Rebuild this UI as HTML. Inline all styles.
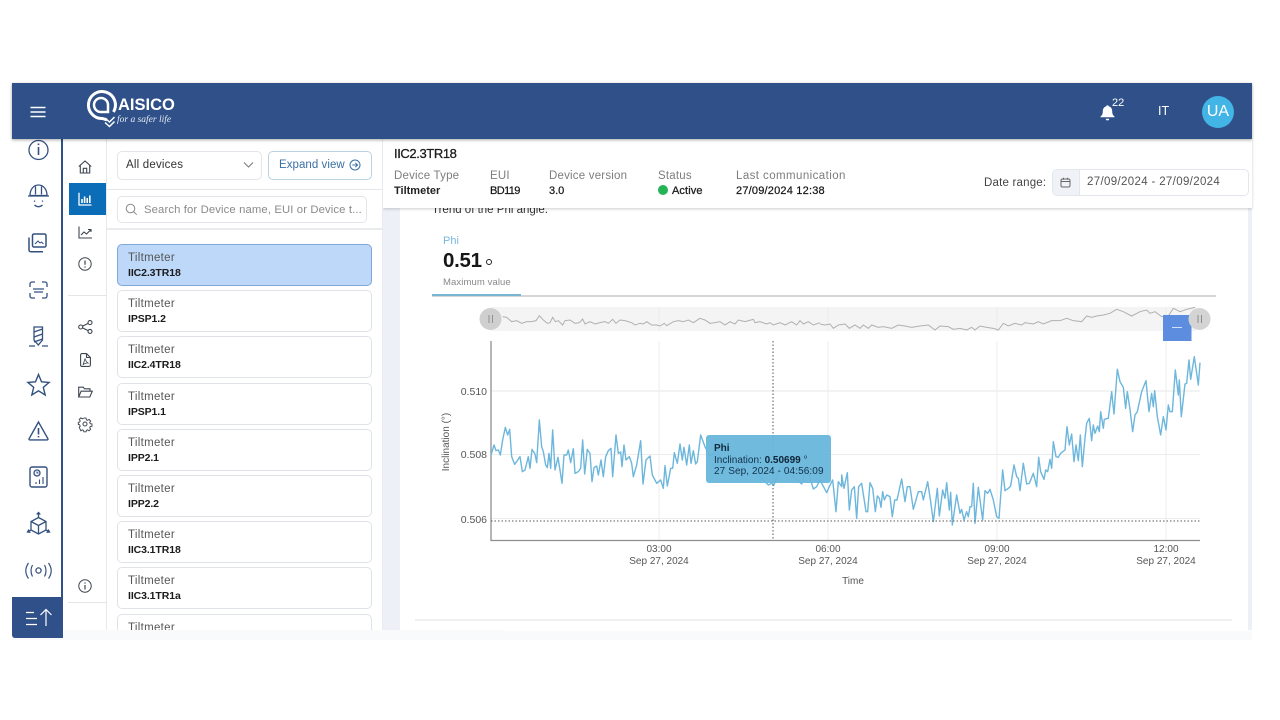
<!DOCTYPE html>
<html lang="en"><head><meta charset="utf-8"><title>AISICO</title>
<style>
html,body{margin:0;padding:0;background:#fff}
body{width:1280px;height:720px;position:relative;overflow:hidden;font-family:"Liberation Sans",sans-serif;color:#222}
.a{position:absolute;white-space:nowrap}
.card{position:absolute;left:117px;width:253px;height:40px;border:1px solid #dfe3e8;border-radius:5px;background:#fff;overflow:hidden}
.card .t{position:absolute;left:10px;top:7px;font-size:11.5px;letter-spacing:.3px;color:#555}
.card .n{position:absolute;left:10px;top:22px;font-size:10.5px;font-weight:bold;color:#1b1b1b;letter-spacing:-.1px}
.lbl{position:absolute;top:170px;font-size:11.5px;letter-spacing:.2px;color:#7d7d7d;white-space:nowrap}
.val{position:absolute;top:185px;font-size:11px;font-weight:bold;color:#222;white-space:nowrap}
svg.i{position:absolute;overflow:visible;fill:none}
</style></head><body>

<!-- backgrounds -->
<div class="a" style="left:12px;top:139px;width:1240px;height:501px;background:#fff"></div>
<div class="a" style="left:383px;top:139px;width:869px;height:491px;background:#edf1f7"></div>
<div class="a" style="left:400px;top:200px;width:848px;height:430px;background:#fff"></div>
<div class="a" style="left:12px;top:630px;width:494px;height:10px;background:#f9fafb"></div>
<div class="a" style="left:380px;top:631px;width:872px;height:9px;background:#f9fafb"></div>
<div class="a" style="left:415px;top:619px;width:817px;height:2px;background:#efefef"></div>

<!-- trend text clipped by header -->
<div class="a" style="left:432px;top:204px;font-size:11.5px;color:#333">Trend of the Phi angle.</div>

<!-- detail header -->
<div class="a" style="left:383px;top:139px;width:869px;height:69px;background:#fff;box-shadow:0 1px 3px rgba(0,0,0,.2)"></div>
<div class="a" style="left:394px;top:146px;font-size:13px;color:#1c1c1c;letter-spacing:-.4px;-webkit-text-stroke:.3px #1c1c1c">IIC2.3TR18</div>
<div class="lbl" style="left:394px">Device Type</div><div class="val" style="left:394px">Tiltmeter</div>
<div class="lbl" style="left:490px">EUI</div><div class="val" style="left:490px;font-weight:normal;color:#111;letter-spacing:-.6px;-webkit-text-stroke:.2px #111">BD119</div>
<div class="lbl" style="left:549px">Device version</div><div class="val" style="left:549px;font-weight:normal;color:#111;-webkit-text-stroke:.2px #111">3.0</div>
<div class="lbl" style="left:658px">Status</div>
<div class="a" style="left:658px;top:185px;width:10px;height:10px;border-radius:50%;background:#22b455"></div>
<div class="val" style="left:672px;font-weight:normal;-webkit-text-stroke:.3px #222;letter-spacing:.1px">Active</div>
<div class="lbl" style="left:736px;letter-spacing:.42px">Last communication</div><div class="val" style="left:736px;font-weight:normal;color:#111;letter-spacing:.2px;-webkit-text-stroke:.2px #111">27/09/2024 12:38</div>
<div class="a" style="left:984px;top:177px;font-size:11.5px;letter-spacing:.2px;color:#444">Date range:</div>
<div class="a" style="left:1052px;top:169px;width:195px;height:25px;border:1px solid #e3e7ed;border-radius:5px;background:#fff;overflow:hidden">
 <div class="a" style="left:0;top:0;width:26px;height:25px;background:#eff3f8;border-right:1px solid #e3e7ed"></div>
 <div class="a" style="left:34px;top:6px;font-size:11.5px;letter-spacing:.34px;color:#555">27/09/2024 - 27/09/2024</div>
</div>
<svg class="i" style="left:1060px;top:177px" width="11" height="11" viewBox="0 0 11 11" stroke="#666" stroke-width="1"><rect x="1" y="2" width="9" height="8" rx="1.5"/><path d="M1 4.5h9M3.5 .8v2M7.5 .8v2"/></svg>

<!-- device list -->
<div class="a" style="left:106px;top:139px;width:277px;height:491px;background:#fff;border-left:1px solid #e8e8e8;border-right:1px solid #e8ecf1;box-sizing:border-box"></div>
<div class="a" style="left:107px;top:189px;width:275px;height:1px;background:#e5e7ea"></div>
<div class="a" style="left:107px;top:228px;width:275px;height:2px;background:#e9ebee"></div>
<div class="a" style="left:117px;top:151px;width:143px;height:27px;border:1px solid #e2e5e9;border-radius:5px"></div>
<div class="a" style="left:126px;top:159px;font-size:11.5px;letter-spacing:.2px;color:#333">All devices</div>
<svg class="i" style="left:243px;top:161px" width="11" height="8" viewBox="0 0 11 8" stroke="#777" stroke-width="1"><path d="M1 1.5l4.5 4.500 4.500-4.500"/></svg>
<div class="a" style="left:268px;top:151px;width:102px;height:27px;border:1px solid #b9d3e3;border-radius:5px"></div>
<div class="a" style="left:279px;top:159px;font-size:11.5px;letter-spacing:.05px;color:#3a70a5">Expand view</div>
<svg class="i" style="left:349px;top:159px" width="12" height="12" viewBox="0 0 12 12" stroke="#3a70a5" stroke-width="1"><circle cx="6" cy="6" r="5"/><path d="M3.3 6h5.200M6.300 3.800L8.600 6 6.300 8.200"/></svg>
<div class="a" style="left:117px;top:196px;width:248px;height:25px;border:1px solid #e2e5e9;border-radius:5px"></div>
<svg class="i" style="left:125px;top:203px" width="13" height="13" viewBox="0 0 13 13" stroke="#8a8a8a" stroke-width="1"><circle cx="5.500" cy="5.500" r="4.300"/><path d="M8.700 8.700l3 3"/></svg>
<div class="a" style="left:144px;top:204px;font-size:11.3px;letter-spacing:.12px;color:#8a8a8a">Search for Device name, EUI or Device t...</div>

<div class="card" style="top:244px;height:40px;background:#bdd8f9;border-color:#7fa8d8"><div class="t">Tiltmeter</div><div class="n">IIC2.3TR18</div></div>
<div class="card" style="top:290px"><div class="t">Tiltmeter</div><div class="n">IPSP1.2</div></div>
<div class="card" style="top:336px"><div class="t">Tiltmeter</div><div class="n">IIC2.4TR18</div></div>
<div class="card" style="top:383px"><div class="t">Tiltmeter</div><div class="n">IPSP1.1</div></div>
<div class="card" style="top:429px"><div class="t">Tiltmeter</div><div class="n">IPP2.1</div></div>
<div class="card" style="top:475px"><div class="t">Tiltmeter</div><div class="n">IPP2.2</div></div>
<div class="card" style="top:521px"><div class="t">Tiltmeter</div><div class="n">IIC3.1TR18</div></div>
<div class="card" style="top:567px"><div class="t">Tiltmeter</div><div class="n">IIC3.1TR1a</div></div>
<div class="card" style="top:614px;height:40px;clip-path:inset(0 0 24px 0)"><div class="t">Tiltmeter</div></div>
<div class="a" style="left:107px;top:630px;width:276px;height:10px;background:#f9fafb"></div>

<!-- sub nav -->
<div class="a" style="left:69px;top:183px;width:37px;height:32px;background:#0b6cb8"></div>
<div class="a" style="left:68px;top:295px;width:38px;height:1px;background:#e5e5e5"></div>
<div class="a" style="left:68px;top:602px;width:38px;height:1px;background:#e5e5e5"></div>
<svg class="i" style="left:78px;top:160px" width="14" height="14" viewBox="0 0 14 14" stroke="#3d4650" stroke-width="1.100"><path d="M.8 6.500L7 1l6.200 5.500M2.300 5.500V13h9.400V5.500M5.300 13V8.300h3.400V13"/></svg>
<svg class="i" style="left:78px;top:192px" width="14" height="14" viewBox="0 0 14 14" stroke="#fff" stroke-width="1.300"><path d="M1 .8V13h12.500"/><path d="M4 11V7M6.600 11V4.500M9.200 11V6M11.800 11V3.500" stroke-width="1.600"/></svg>
<svg class="i" style="left:78px;top:226px" width="14" height="13" viewBox="0 0 14 13" stroke="#3d4650" stroke-width="1.100"><path d="M1 .5V12h13"/><path d="M3 9l3-3 2.500 2 4-4M10 3.500h3V6"/></svg>
<svg class="i" style="left:78px;top:257px" width="14" height="14" viewBox="0 0 14 14" stroke="#3d4650" stroke-width="1"><circle cx="7" cy="7" r="6.200"/><path d="M7 3.500v4.300M7 9.400v1.200" stroke-width="1.200"/></svg>
<svg class="i" style="left:78px;top:320px" width="15" height="14" viewBox="0 0 15 14" stroke="#3d4650" stroke-width="1.100"><circle cx="2.700" cy="7" r="2"/><circle cx="12" cy="2.600" r="2"/><circle cx="12" cy="11.400" r="2"/><path d="M4.500 6.100l5.700-2.700M4.500 7.900l5.700 2.700"/></svg>
<svg class="i" style="left:80px;top:353px" width="11" height="14" viewBox="0 0 11 14" stroke="#3d4650" stroke-width="1.100"><path d="M6.500.6H2A1.400 1.400 0 0 0 .6 2v10A1.400 1.400 0 0 0 2 13.400h7a1.400 1.400 0 0 0 1.400-1.400V4.500zM6.500.6v3.900h3.900"/><path d="M5 5.500c.7 2.500 1.200 3.500 3 4.500-2 0-4 .5-5 2 .5-2 1.500-4 2-6.500" stroke-width=".8"/></svg>
<svg class="i" style="left:78px;top:386px" width="15" height="12" viewBox="0 0 15 12" stroke="#3d4650" stroke-width="1.100"><path d="M.7 11V1.200h4.500l1.300 1.600h5.500v2.400M.7 11l2.400-5.800h11.200L11.800 11z"/></svg>
<svg class="i" style="left:78px;top:417px" width="14" height="14" viewBox="0 0 14 14" stroke="#3d4650" stroke-width="1"><circle cx="7" cy="7" r="2"/><path d="M5.800.8h2.400l.3 1.800 1.300.6 1.500-1 1.700 1.700-1 1.500.6 1.300 1.800.3v2.400l-1.800.3-.6 1.300 1 1.500-1.700 1.700-1.500-1-1.300.6-.3 1.500H5.800l-.3-1.500-1.300-.6-1.500 1L1 10.700l1-1.500-.6-1.300-1.400-.3V5.400l1.400-.3.6-1.300-1-1.500L2.700 .6l1.500 1 1.300-.6z" transform="translate(.3 .3) scale(.95)"/></svg>
<svg class="i" style="left:78px;top:579px" width="14" height="14" viewBox="0 0 14 14" stroke="#3d4650" stroke-width="1"><circle cx="7" cy="7" r="6.200"/><path d="M7 6v4.500M7 3.400v1.200" stroke-width="1.200"/></svg>

<!-- left rail -->
<div class="a" style="left:61px;top:139px;width:2px;height:499px;background:#2f5088"></div>
<svg class="i" style="left:12px;top:139px;stroke:#33507f" width="50" height="460" viewBox="0 0 50 460" stroke-width="1.300">
 <!-- info -->
 <circle cx="26.500" cy="11" r="9.500"/><path d="M26.500 8v8M26.500 4.500v1.600" stroke-width="1.600"/>
 <!-- helmet with face -->
 <path d="M16 57h21M18 56.500c0-6 3.500-10.500 8.500-10.500S35 50.500 35 56.500M23.500 47.500v8M29.500 47.500v8M18 56.500h17"/>
 <path d="M22.500 61.500v1.200M30.500 61.500v1.200M22.500 66c2.500 2.300 5.500 2.300 8 0"/>
 <!-- images -->
 <rect x="20.500" y="95" width="13.500" height="13" rx="1.500" stroke-width="1.500"/>
 <path d="M17 98.500v12.500a1.800 1.800 0 0 0 1.800 1.800H31" stroke-width="1.500"/>
 <path d="M23 105l3-3 2 2 1.500-1 2 2" stroke-width="1"/>
 <!-- scan -->
 <path d="M18 148v-3a2 2 0 0 1 2-2h3M30 143h3a2 2 0 0 1 2 2v3M35 154v3a2 2 0 0 1-2 2h-3M23 159h-3a2 2 0 0 1-2-2v-3M21 150h11M22 153h9"/>
 <!-- drill -->
 <path d="M22 188h8.500v13l-4.200 5-4.300-5zM22 193l8.500-3M22 198l8.500-3M22 203l8.500-3"/>
 <path d="M17 207h6M30 207h6"/>
 <!-- star -->
 <path d="M26.500 235.500l3 7.300 7.600.6-5.800 5 1.900 7.600-6.700-4.200-6.700 4.200 1.900-7.600-5.800-5 7.600-.6z" stroke-width="1.400"/>
 <!-- warning -->
 <path d="M26.500 283l-9.400 16.700a.8.800 0 0 0 .7 1.200h17.400a.8.800 0 0 0 .7-1.200z" stroke-width="1.400"/><path d="M26.500 289v6.500M26.500 297v1.400" stroke-width="1.600"/>
 <!-- report -->
 <rect x="18" y="328" width="17" height="20" rx="2" stroke-width="1.400"/><circle cx="25" cy="334" r="3"/><path d="M25 332.500V334h1.500M24 345v-2M27.500 345v-4.500M31 345v-7" stroke-width="1.100"/>
 <!-- cube -->
 <path d="M26.500 378.500l7.500 4v8.500l-7.500 4-7.500-4v-8.500zM19 382.500l7.500 4 7.500-4M26.500 386.500v8.500M26.500 378.500V374M24.700 375.500l1.800-2 1.800 2M19 391l-3 1.800M34 391l3 1.800M17 390.500l-1.500 2.500 3 .3M36 390.500l1.500 2.500-3 .3"/>
 <!-- radio -->
 <circle cx="26.500" cy="431.500" r="2.600"/><path d="M20.500 426c-2 3.500-2 8 0 11.500M32.500 426c2 3.500 2 8 0 11.500M16.500 424c-3.500 5-3.500 10.500 0 15.500M36.500 424c3.500 5 3.500 10.500 0 15.500" stroke-width="1.200"/>
</svg>
<div class="a" style="left:12px;top:597px;width:51px;height:41px;background:#2f5088;border-radius:0 0 0 3px"></div>
<svg class="i" style="left:25px;top:608px" width="26" height="20" viewBox="0 0 26 20" stroke="#fff" stroke-width="1.200"><path d="M1 4.500h8M1 10.500h11M1 16.500h11M21 18V2M15.500 7L21 1.500 26.500 7"/></svg>

<!-- top bar -->
<div class="a" style="left:12px;top:83px;width:1240px;height:56px;background:#2f5088;box-shadow:0 1px 3px rgba(0,0,0,.35)"></div>
<svg class="i" style="left:30px;top:106px" width="16" height="12" viewBox="0 0 16 12" stroke="#fff" stroke-width="1.500"><path d="M.5 1.500h15M.5 6h15M.5 10.500h15"/></svg>
<svg class="i" style="left:85px;top:89px" width="34" height="40" viewBox="0 0 34 40" stroke="#fff"><path d="M22 31L17.500 29.500A13.500 13.500 0 1 1 28.500 23" stroke-width="3"/><path d="M23 16a7 7 0 1 0-7 7h7v-7" stroke-width="2.500"/><path d="M20 29l4.500 4 5-5M20 33.500l4.500 4 5-5" stroke-width="1.500"/></svg>
<div class="a" style="left:118px;top:96px;font-size:16.5px;font-weight:bold;color:#fff">AISICO</div>
<div class="a" style="left:117px;top:115px;font-family:'Liberation Serif',serif;font-style:italic;font-size:9.500px;color:#e6ecf5">for a safer life</div>
<svg class="i" style="left:1100px;top:104px" width="15" height="17" viewBox="0 0 15 17"><path d="M7.500 1.200c.8 0 1.200.5 1.300 1.200 2.200.6 3.400 2.500 3.400 4.800 0 2.500.6 4 2.300 5.300v.8H.5v-.8c1.700-1.300 2.300-2.800 2.300-5.300 0-2.300 1.200-4.200 3.400-4.800.1-.7.5-1.200 1.300-1.200zM5.800 14.700h3.400a1.700 1.700 0 0 1-3.400 0z" fill="#fff"/></svg>
<div class="a" style="left:1112px;top:97px;font-size:11px;color:#fff">22</div>
<div class="a" style="left:1158px;top:104px;font-size:12.500px;color:#fff">IT</div>
<div class="a" style="left:1202px;top:96px;width:32px;height:32px;border-radius:50%;background:#42b5e6;color:#fff;font-size:16px;line-height:32px;text-align:center">UA</div>

<!-- tab -->
<div class="a" style="left:443px;top:235px;font-size:11px;color:#76b8dc">Phi</div>
<div class="a" style="left:443px;top:249px;font-size:20.500px;font-weight:bold;color:#161616;letter-spacing:-.3px">0.51</div>
<div class="a" style="left:486px;top:259px;width:4px;height:4px;border:1.400px solid #222;border-radius:50%"></div>
<div class="a" style="left:443px;top:277px;font-size:9.500px;letter-spacing:.1px;color:#888">Maximum value</div>
<div class="a" style="left:432px;top:295px;width:784px;height:2px;background:#d6d6d6"></div>
<div class="a" style="left:432px;top:294px;width:89px;height:2px;background:#77b5d3"></div>

<!-- chart -->
<svg class="a" style="left:0;top:0" width="1280" height="720" viewBox="0 0 1280 720">
 <rect x="491" y="307" width="705" height="24" fill="#f4f4f4"/>
 <g stroke="#ececec" stroke-width="1" fill="none">
  <path d="M659 341V540M828 341V540M997 341V540M1166 341V540"/>
  <path d="M491 391H1200" stroke-width="1.300"/><path d="M491 454.500H1200"/><path d="M491 518.500H1200"/>
 </g>
 <path d="M659 307v24M828 307v24M997 307v24M1166 307v24" stroke="#ebebeb" fill="none"/>
 <g fill="none" stroke="#b0b0b0" stroke-width="1">
  <polyline vector-effect="non-scaling-stroke" transform="translate(430 300) scale(.33333)" points="218,50 230,52 245,65 260,62 275,70 290,65 305,65 318,62 328,47 340,60 352,70 360,68 368,52 376,65 385,62 398,75 405,62 420,60 435,70 448,68 458,57 465,72 480,65 495,72 510,68 525,65 535,70 548,58 558,70 570,60 585,62 605,68 615,75 630,70 640,72 650,65 665,75 680,75 690,78 703,70 710,77 730,65 745,62 760,65 775,60 790,68 810,55 825,60 840,70 855,68 870,65 885,75 900,65 915,72 925,60 945,65 970,58 975,68 990,65 1010,72 1020,68 1030,75 1050,68 1065,75 1085,65 1100,75 1110,62 1120,72 1135,65 1150,75 1170,68"/>
  <polyline vector-effect="non-scaling-stroke" transform="translate(820 300) scale(.33333)" points="0,72 15,75 30,72 40,85 55,75 75,72 88,85 105,75 120,85 130,75 145,85 155,75 175,82 190,80 215,85 235,75 255,78 275,82 300,78 325,75 345,90 360,78 385,80 400,88 420,85 440,90 455,82 465,90 480,78 500,82 520,85 535,90 550,70 565,78 585,70 605,75 615,68 640,72 655,65 670,72 695,62 720,62 740,55 760,62 785,65 800,48 815,52 830,48 850,45 870,40 890,28 910,35 935,48 960,35 980,30 990,40 1005,35 1025,50 1045,48 1060,25 1080,35 1100,28 1125,22"/>
 </g>
 <circle cx="490.500" cy="319" r="11" fill="#cfcfcf"/><path d="M489 315v8M492.500 315v8" stroke="#909090" fill="none"/>
 <rect x="1163" y="315" width="28.500" height="26" fill="#5d8ddf"/><path d="M1172 327.500h10" stroke="#cfe0f7" fill="none"/>
 <circle cx="1199.500" cy="319" r="11" fill="#d4d4d4"/><path d="M1198 315v8M1201.500 315v8" stroke="#8c8c8c" fill="none"/>
 <path d="M491 341V540.500H1200" stroke="#8e8e8e" stroke-width="1.300" fill="none"/>
 <g fill="none" stroke="#6db6dc" stroke-width="1.400" stroke-linejoin="round">
  <polyline vector-effect="non-scaling-stroke" transform="translate(430 300) scale(.33333)" points="183,465 192,435 198,452 205,450 211,465 218,420 226,382 233,405 239,388 245,470 254,493 262,482 270,470 277,515 285,510 295,470 300,505 306,448 315,462 320,488 328,360 335,440 340,455 347,495 352,503 357,460 362,505 368,390 375,510 384,472 390,510 396,550 402,465 410,465 415,450 422,488 430,446 435,520 445,515 452,505 458,420 464,522 472,448 480,460 486,545 492,503 500,498 505,525 513,480 520,530 527,470 535,452 543,445 548,530 558,405 565,460 572,456 576,500 582,435 588,480 598,470 605,490 610,530 620,495 632,422 639,552 648,480 660,468 667,525 680,550 692,540 700,565 705,497 712,558 722,505 728,505 733,458 742,490 750,432 757,480 762,442 770,495 778,435 783,490 790,452 797,492 802,485 812,405 825,440 840,470 860,450 880,500 900,470 930,510 960,480 990,530 1015,555 1025,550 1032,555 1050,500 1080,520 1115,552 1130,500 1150,567 1160,560 1170,540 1190,578 1198,560 1208,540 1218,635 1225,545 1235,560 1235,525 1242,565 1252,518 1258,630 1265,570 1273,560 1280,655 1286,560 1295,550 1308,635 1313,635 1320,548 1328,565 1336,635 1342,588 1348,595 1353,622 1358,575 1363,600 1370,585 1380,590 1387,650 1394,600 1401,600 1415,537 1425,605 1432,560 1440,560 1450,628 1465,575 1475,575 1480,600 1493,545 1502,605 1510,665 1522,565 1528,648 1538,570 1545,595 1550,548 1558,630 1562,577 1567,675 1580,585 1590,640 1595,628 1602,660 1610,635 1615,650 1620,620 1625,620 1630,550 1635,670 1645,562 1658,660 1665,572 1673,580 1680,568 1690,600 1700,650 1707,655 1718,510 1725,572 1735,565 1742,558 1752,495 1760,530 1765,535 1770,572 1780,490 1790,552 1798,550 1810,520 1820,560 1826,472 1832,515 1842,538 1847,510 1853,515 1860,478 1865,505 1870,425 1878,470 1885,472 1892,460 1905,450 1911,380 1918,435 1925,402 1932,485 1938,435 1945,482 1951,405 1957,500 1965,415 1970,370 1978,355 1985,422 1990,375 1995,400 2003,378 2008,395 2012,335 2020,385 2023,358 2035,355 2045,275 2052,342 2062,208 2070,245 2080,262 2087,325 2092,275 2100,328 2108,395 2115,345 2122,335 2135,275 2148,242 2157,335 2165,280 2170,320 2174,272 2182,350 2192,405 2200,350 2208,390 2215,315 2220,335 2227,335 2236,210 2245,285 2248,240 2254,350 2265,252 2270,250 2277,180 2282,238 2293,170 2305,255 2310,188"/>
 </g>
 <path d="M491 521H1200" stroke="#5a5a5a" stroke-width="1" stroke-dasharray="1.500 2" fill="none"/>
 <path d="M773 341V540" stroke="#555" stroke-width="1" stroke-dasharray="1.500 2" fill="none"/>
 <g font-family="Liberation Sans, sans-serif" font-size="10" fill="#555">
  <text x="487" y="395" text-anchor="end" font-size="10.500">0.510</text>
  <text x="487" y="458" text-anchor="end" font-size="10.500">0.508</text>
  <text x="487" y="523" text-anchor="end" font-size="10.500">0.506</text>
  <text x="449" y="442" text-anchor="middle" transform="rotate(-90 449 442)">Inclination (°)</text>
  <text x="659" y="552" text-anchor="middle">03:00</text><text x="659" y="564" text-anchor="middle">Sep 27, 2024</text>
  <text x="828" y="552" text-anchor="middle">06:00</text><text x="828" y="564" text-anchor="middle">Sep 27, 2024</text>
  <text x="997" y="552" text-anchor="middle">09:00</text><text x="997" y="564" text-anchor="middle">Sep 27, 2024</text>
  <text x="1166" y="552" text-anchor="middle">12:00</text><text x="1166" y="564" text-anchor="middle">Sep 27, 2024</text>
  <text x="853" y="584" text-anchor="middle">Time</text>
 </g>
</svg>

<!-- tooltip -->
<div class="a" style="left:706px;top:435px;width:125px;height:48px;background:rgba(104,182,220,.95);border-radius:3px;font-size:10px;line-height:12px;color:#14324a">
 <div class="a" style="left:8px;top:8px;font-weight:bold;color:#10293c">Phi</div>
 <div class="a" style="left:8px;top:20px">Inclination: <b style="color:#0d2436">0.50699</b> °</div>
 <div class="a" style="left:8px;top:31px;letter-spacing:.1px">27 Sep, 2024 - 04:56:09</div>
</div>
</body></html>
